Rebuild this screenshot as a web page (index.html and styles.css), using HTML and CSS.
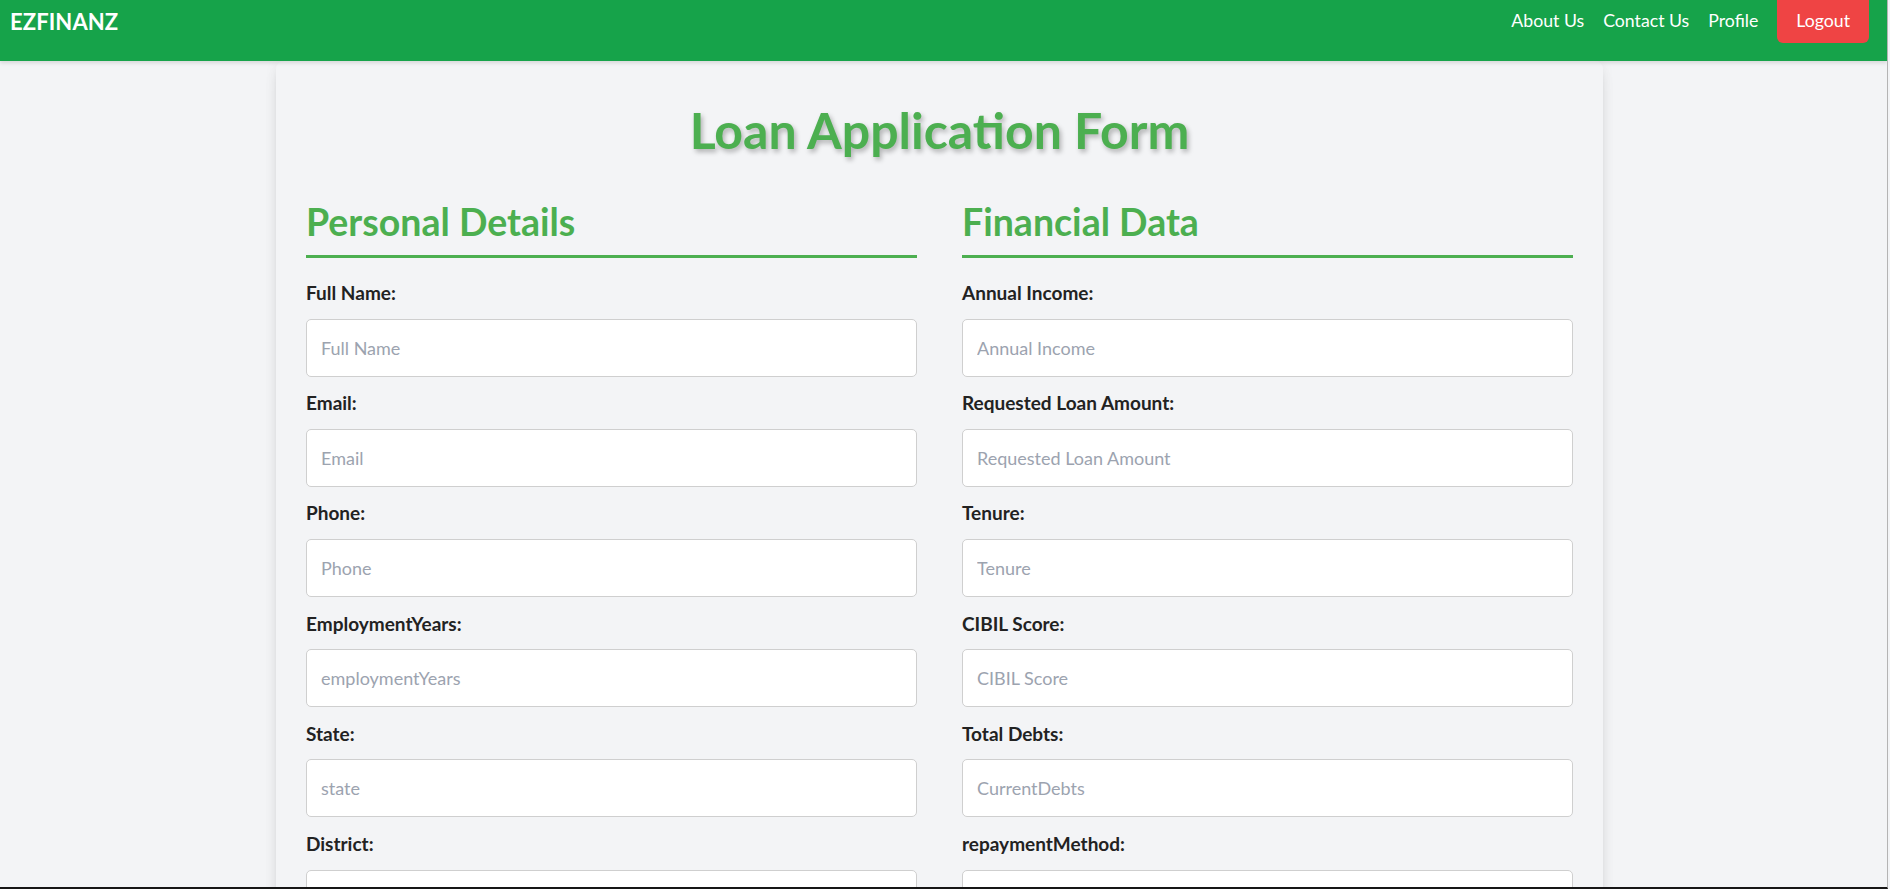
FILE: index.html
```html
<!DOCTYPE html>
<html lang="en">
<head>
<meta charset="utf-8">
<title>EZFINANZ - Loan Application</title>
<link rel="stylesheet" href="styles.css">
</head>
<body>
<div class="app">
  <header class="navbar">
    <div class="brand">EZFINANZ</div>
    <nav class="nav-links">
      <a class="nav-link" href="#">About Us</a>
      <a class="nav-link" href="#">Contact Us</a>
      <a class="nav-link" href="#">Profile</a>
      <button class="logout" type="button">Logout</button>
    </nav>
  </header>
  <main class="main">
    <form class="card">
      <h1 class="title">Loan Application Form</h1>
      <div class="columns">
        <section class="column">
          <h2 class="section-title">Personal Details</h2>
          <label class="field-label">Full Name:</label>
          <input class="field-input" type="text" placeholder="Full Name">
          <label class="field-label">Email:</label>
          <input class="field-input" type="text" placeholder="Email">
          <label class="field-label">Phone:</label>
          <input class="field-input" type="text" placeholder="Phone">
          <label class="field-label">EmploymentYears:</label>
          <input class="field-input" type="text" placeholder="employmentYears">
          <label class="field-label">State:</label>
          <input class="field-input" type="text" placeholder="state">
          <label class="field-label">District:</label>
          <input class="field-input" type="text" placeholder="district">
        </section>
        <section class="column">
          <h2 class="section-title">Financial Data</h2>
          <label class="field-label">Annual Income:</label>
          <input class="field-input" type="text" placeholder="Annual Income">
          <label class="field-label">Requested Loan Amount:</label>
          <input class="field-input" type="text" placeholder="Requested Loan Amount">
          <label class="field-label">Tenure:</label>
          <input class="field-input" type="text" placeholder="Tenure">
          <label class="field-label">CIBIL Score:</label>
          <input class="field-input" type="text" placeholder="CIBIL Score">
          <label class="field-label">Total Debts:</label>
          <input class="field-input" type="text" placeholder="CurrentDebts">
          <label class="field-label">repaymentMethod:</label>
          <input class="field-input" type="text" placeholder="repaymentMethod">
        </section>
      </div>
    </form>
  </main>
</div>
</body>
</html>
```

FILE: styles.css
```css
html, body {
  margin: 0;
  padding: 0;
  overflow: hidden;
  background: #f3f4f6;
}

body {
  font-family: "Lato", "Roboto", sans-serif;
  color: #222;
}

.app {
  width: 1887px;
  height: 887px;
  overflow: hidden;
  border-right: 1px solid #b4b4b4;
  border-bottom: 2px solid #161616;
  background: #f3f4f6;
  display: flex;
  flex-direction: column;
}

/* Navbar */
.navbar {
  flex: 0 0 61px;
  height: 61px;
  box-sizing: border-box;
  background: #16a34a;
  display: flex;
  justify-content: space-between;
  align-items: flex-start;
  padding: 0 18px 0 10px;
  box-shadow: 0 2px 4px rgba(0, 0, 0, 0.12);
  position: relative;
  z-index: 2;
}

.brand {
  margin-top: 8.6px;
  font-size: 22px;
  font-weight: 700;
  line-height: 26.4px;
  color: #fff;
  letter-spacing: 0.1px;
}

.nav-links {
  display: flex;
  align-items: flex-start;
  gap: 19px;
}

.nav-link {
  margin-top: 10px;
  font-size: 17.7px;
  line-height: 21.6px;
  color: #fff;
  text-decoration: none;
}

.logout {
  height: 43px;
  box-sizing: border-box;
  padding: 10px 19px 11.4px;
  border: none;
  border-radius: 0 0 6px 6px;
  background: #ef4444;
  color: #fff;
  font-family: inherit;
  font-size: 17.7px;
  line-height: 21.6px;
  text-align: center;
}

/* Main */
.main {
  flex: 1;
  padding-right: 8px;
  position: relative;
  z-index: 1;
}

.card {
  width: 1327px;
  margin: 0 auto;
  box-sizing: border-box;
  padding: 30px 30px 40px;
  background: #f3f4f6;
  border-radius: 8px;
  box-shadow: 0 10px 15px -3px rgba(0, 0, 0, 0.1), 0 4px 6px -4px rgba(0, 0, 0, 0.1), 0 0 14px rgba(0, 0, 0, 0.05);
  min-height: 1000px;
}

.title {
  margin: 8.6px 0 0;
  text-align: center;
  font-size: 50px;
  line-height: 60px;
  font-weight: 700;
  color: #4caf50;
  text-shadow: 2px 3px 5px rgba(0, 0, 0, 0.28);
}

.columns {
  margin-top: 39px;
  display: grid;
  grid-template-columns: 1fr 1fr;
  column-gap: 45px;
}

.column {
  display: flex;
  flex-direction: column;
}

.section-title {
  margin: 0 0 21.2px;
  padding-bottom: 11.3px;
  font-size: 37.5px;
  line-height: 45px;
  font-weight: 700;
  color: #4caf50;
  border-bottom: 3px solid #4caf50;
}

.field-label {
  display: block;
  font-size: 19px;
  line-height: 27px;
  font-weight: 700;
  color: #222;
  margin-bottom: 12.6px;
}

.field-input {
  height: 58px;
  box-sizing: border-box;
  margin: 0 0 12.6px;
  padding: 0 14px;
  border: 1px solid #cfcfcf;
  border-radius: 5px;
  background: #fff;
  font-family: inherit;
  font-size: 18px;
  color: #222;
  outline: none;
}

.field-input::placeholder {
  color: #9ca3af;
}
```
